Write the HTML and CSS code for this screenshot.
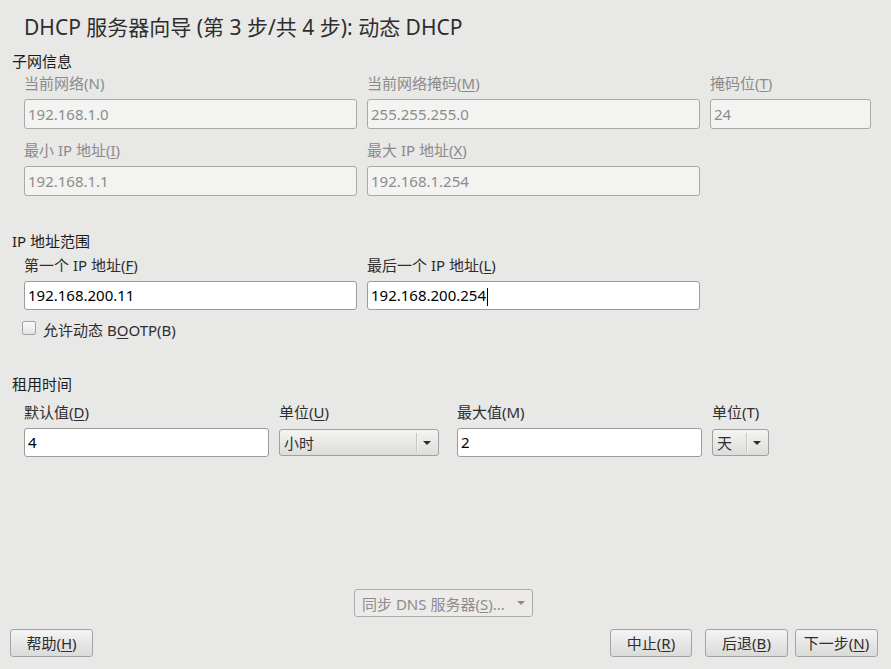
FILE: index.html
```html
<!DOCTYPE html>
<html lang="zh-CN">
<head>
<meta charset="utf-8">
<title>DHCP 服务器向导</title>
<link rel="stylesheet" href="styles.css">
</head>
<body>
<div class="page">
  <h1 class="title">DHCP 服务器向导 (第 3 步/共 4 步): 动态 DHCP</h1>

  <section class="group group-subnet">
    <div class="group-title">子网信息</div>
    <div class="grid grid-subnet">
      <div class="field">
        <div class="label disabled">当前网络(N)</div>
        <div class="entry disabled">192.168.1.0</div>
      </div>
      <div class="field">
        <div class="label disabled">当前网络掩码(<u>M</u>)</div>
        <div class="entry disabled">255.255.255.0</div>
      </div>
      <div class="field">
        <div class="label disabled">掩码位(<u>T</u>)</div>
        <div class="entry disabled">24</div>
      </div>
      <div class="field">
        <div class="label disabled">最小 IP 地址(<u>I</u>)</div>
        <div class="entry disabled">192.168.1.1</div>
      </div>
      <div class="field">
        <div class="label disabled">最大 IP 地址(<u>X</u>)</div>
        <div class="entry disabled">192.168.1.254</div>
      </div>
    </div>
  </section>

  <section class="group group-range">
    <div class="group-title">IP 地址范围</div>
    <div class="grid grid-range">
      <div class="field">
        <div class="label">第一个 IP 地址(<u>F</u>)</div>
        <div class="entry active">192.168.200.11</div>
      </div>
      <div class="field">
        <div class="label">最后一个 IP 地址(<u>L</u>)</div>
        <div class="entry active">192.168.200.254<span class="caret"></span></div>
      </div>
    </div>
    <label class="check-row">
      <span class="checkbox"></span>
      <span class="check-label">允许动态 B<u>O</u>OTP(B)</span>
    </label>
  </section>

  <section class="group group-lease">
    <div class="group-title">租用时间</div>
    <div class="grid grid-lease">
      <div class="field">
        <div class="label">默认值(<u>D</u>)</div>
        <div class="entry active">4</div>
      </div>
      <div class="field">
        <div class="label">单位(<u>U</u>)</div>
        <div class="combo combo-unit">
          <span class="combo-text">小时</span>
          <span class="combo-sep"></span>
          <span class="combo-arrow"></span>
        </div>
      </div>
      <div class="field">
        <div class="label">最大值(M)</div>
        <div class="entry active">2</div>
      </div>
      <div class="field">
        <div class="label">单位(T)</div>
        <div class="combo combo-small">
          <span class="combo-text">天</span>
          <span class="combo-sep"></span>
          <span class="combo-arrow"></span>
        </div>
      </div>
    </div>
  </section>

  <div class="spacer"></div>

  <div class="dns-row">
    <div class="combo combo-disabled">
      <span class="combo-text">同步 DNS 服务器(<u>S</u>)...</span>
      <span class="combo-arrow"></span>
    </div>
  </div>

  <div class="button-row">
    <button class="btn btn-help">帮助(<u>H</u>)</button>
    <div class="button-gap"></div>
    <button class="btn">中止(<u>R</u>)</button>
    <button class="btn btn-back">后退(<u>B</u>)</button>
    <button class="btn btn-next">下一步(<u>N</u>)</button>
  </div>
</div>
</body>
</html>
```

FILE: styles.css
```css
* {
  box-sizing: border-box;
}

html, body {
  margin: 0;
  padding: 0;
}

body {
  background: #e8e8e7;
  font-family: "Noto Sans", "Noto Sans CJK SC", sans-serif;
  font-size: 15px;
  color: #2e3436;
  overflow: hidden;
}

u {
  text-decoration: underline;
  text-underline-offset: 2px;
}

.page {
  height: 669px;
  display: flex;
  flex-direction: column;
  padding: 13px 13px 12px 0;
}

.title {
  margin: 0 0 0 24px;
  font-size: 21px;
  font-weight: normal;
  line-height: 28px;
  color: #2e2e2e;
}

.group {
  padding-left: 12px;
}

.group-title {
  line-height: 20px;
  color: #1c1c1c;
}

.group-subnet {
  margin-top: 10px;
}

.group-range {
  margin-top: 35px;
}

.group-lease {
  margin-top: 35px;
}

.grid {
  display: grid;
  margin-left: 12px;
}

.grid-subnet {
  margin-top: 2px;
  grid-template-columns: 333px 333px 161px;
  column-gap: 10px;
  row-gap: 11px;
}

.grid-range {
  margin-top: 4px;
  grid-template-columns: 333px 333px;
  column-gap: 10px;
}

.grid-lease {
  margin-top: 8px;
  grid-template-columns: 245px 168px 245px 57px;
  column-gap: 10px;
}

.field {
  display: flex;
  flex-direction: column;
}

.label {
  line-height: 20px;
  height: 20px;
  margin-bottom: 6px;
  color: #2e2e2e;
  white-space: nowrap;
}

.label.disabled {
  color: #8b8b8b;
}

.entry {
  height: 29px;
  border: 1px solid #9c9c9c;
  border-radius: 3px;
  padding: 0 3px;
  line-height: 27px;
  white-space: nowrap;
}

.entry.disabled {
  height: 30px;
  line-height: 28px;
  background: #f3f3f2;
  border-color: #a9a9a8;
  color: #8c8c8c;
}

.entry.active {
  background: #ffffff;
  color: #000000;
}

.caret {
  display: inline-block;
  width: 1px;
  height: 18px;
  background: #000;
  vertical-align: middle;
  margin-left: 1px;
}

.check-row {
  display: flex;
  align-items: center;
  margin-top: 9px;
  margin-left: 10px;
  height: 20px;
  color: #2e2e2e;
}

.checkbox {
  width: 14px;
  height: 14px;
  border: 1px solid #a3a3a3;
  border-radius: 2px;
  background: linear-gradient(#fafafa, #e3e3e3);
  margin-top: -3px;
}

.check-label {
  margin-left: 7px;
}

.combo {
  display: flex;
  align-items: center;
  height: 27px;
  margin-top: 1px;
  border: 1px solid #a0a0a0;
  border-radius: 3px;
  background: linear-gradient(#f4f4f3, #dddddc);
  color: #2e2e2e;
  padding-left: 4px;
}

.combo-unit {
  width: 160px;
}

.combo-text {
  flex: 1;
  white-space: nowrap;
  line-height: 25px;
  padding-top: 2px;
}

.combo-sep {
  width: 1px;
  height: 19px;
  background: #c4c4c3;
  box-shadow: 1px 0 0 #f6f6f6;
}

.combo-arrow {
  width: 0;
  height: 0;
  margin: 0 7px 0 6px;
  border-left: 4px solid transparent;
  border-right: 4px solid transparent;
  border-top: 4px solid #2e2e2e;
}

.spacer {
  flex: 1;
}

.dns-row {
  display: flex;
  justify-content: flex-start;
  padding-left: 354px;
}

.combo-disabled {
  width: 179px;
  height: 28px;
  margin-top: 0;
  background: #ecebea;
  border-color: #acacab;
  color: #8c8c8c;
  padding-left: 7px;
}

.combo-disabled .combo-arrow {
  border-top-color: #8c8c8c;
  margin-right: 7px;
}

.button-row {
  display: flex;
  margin-top: 12px;
  padding-left: 10px;
}

.button-gap {
  flex: 1;
}

.btn {
  width: 82px;
  height: 28px;
  border: 1px solid #a3a3a3;
  border-radius: 3px;
  background: linear-gradient(#f4f4f4, #dadad9);
  font-family: "Noto Sans", "Noto Sans CJK SC", sans-serif;
  font-size: 15px;
  color: #2e2e2e;
  padding: 0;
  line-height: 26px;
}

.btn-help {
  width: 83px;
}

.btn-back {
  width: 83px;
  margin-left: 13px;
}

.btn-next {
  width: 83px;
  margin-left: 7px;
}
```
